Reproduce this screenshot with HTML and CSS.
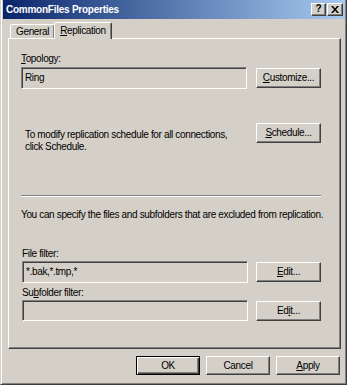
FILE: index.html
```html
<!DOCTYPE html>
<html>
<head>
<meta charset="utf-8">
<link rel="stylesheet" href="styles.css">
</head>
<body>
<div class="window">
  <div class="titlebar">
    <span class="title">CommonFiles Properties</span>
    <div class="tbtns">
      <span class="tbtn help">?</span>
      <span class="tbtn close">
        <svg width="8" height="7" viewBox="0 0 8 7"><path d="M0 0h2l2 2.5L6 0h2L5 3.5 8 7H6L4 4.5 2 7H0l3-3.5z" fill="#000"/></svg>
      </span>
    </div>
  </div>
  <div class="client">
    <div class="tabs">
      <div class="tab">General</div>
      <div class="tab active"><u>R</u>eplication</div>
    </div>
    <div class="panel">
      <div class="label first"><u>T</u>opology:</div>
      <div class="row">
        <div class="field">Ring</div>
        <div class="btn"><u>C</u>ustomize...</div>
      </div>
      <div class="row sched">
        <div class="note">To modify replication schedule for all connections,<br>click Schedule.</div>
        <div class="btn"><u>S</u>chedule...</div>
      </div>
      <div class="sep"></div>
      <div class="desc">You can specify the files and subfolders that are excluded from replication.</div>
      <div class="label ff">File filter:</div>
      <div class="row tight">
        <div class="field">*.bak,*.tmp,*</div>
        <div class="btn"><u>E</u>dit...</div>
      </div>
      <div class="label sf">Su<u>b</u>folder filter:</div>
      <div class="row tight">
        <div class="field short"></div>
        <div class="btn">Ed<u>i</u>t...</div>
      </div>
    </div>
    <div class="actions">
      <div class="btn dlg default">OK</div>
      <div class="btn dlg">Cancel</div>
      <div class="btn dlg"><u>A</u>pply</div>
    </div>
  </div>
</div>
</body>
</html>
```

FILE: styles.css
```css
* { box-sizing: border-box; }
html, body { margin: 0; padding: 0; background: #d4d0c8; }
body {
  font-family: "Liberation Sans", Arial, sans-serif;
  font-size: 10px;
  letter-spacing: -0.35px;
  color: #000;
  width: 347px;
  height: 385px;
  overflow: hidden;
}
u { text-decoration: underline; text-underline-offset: 1px; }
.window {
  width: 347px;
  height: 385px;
  background: #d4d0c8;
  border: 1px solid;
  border-top: 0;
  border-color: #d4d0c8 #404040 #404040 #d4d0c8;
  box-shadow: inset 1px 0 #fff, inset -1px -1px #808080;
  padding: 0 1px 2px 2px;
  display: flex;
  flex-direction: column;
}
.titlebar {
  height: 19px;
  background: linear-gradient(90deg, #0a246a 0%, #3a5a96 30%, #a6caf0 100%);
  display: flex;
  align-items: center;
  justify-content: space-between;
  padding: 0 2px 0 3px;
}
.title {
  color: #fff;
  font-weight: bold;
  font-size: 10px;
  letter-spacing: -0.25px;
}
.tbtns { display: flex; gap: 1px; margin-top: -1px; }
.tbtn {
  width: 15px;
  height: 13px;
  background: #d4d0c8;
  border: 1px solid;
  border-color: #fff #404040 #404040 #fff;
  box-shadow: inset -1px -1px #808080;
  display: flex;
  align-items: center;
  justify-content: center;
  font-weight: bold;
  font-size: 10px;
  line-height: 1;
  letter-spacing: 0;
}
.tbtn.close { width: 16px; }
.client {
  flex: 1;
  display: flex;
  flex-direction: column;
  padding: 3px 3px 0 5px;
}
.tabs {
  display: flex;
  align-items: flex-end;
  height: 16px;
  padding-left: 2px;
  position: relative;
  z-index: 1;
}
.tab {
  height: 14px;
  padding: 0 5px;
  line-height: 13px;
  border: 1px solid;
  border-bottom: 0;
  border-color: #fff #404040 transparent #fff;
  box-shadow: inset -1px 0 #808080;
  border-radius: 2px 2px 0 0;
  background: #d4d0c8;
}
.tab.active {
  height: 17px;
  margin-bottom: -1px;
  padding: 0 5px 0 5px;
  line-height: 15px;
  margin-left: -1px;
}
.panel {
  width: 333px;
  height: 311px;
  border: 1px solid;
  border-color: #fff #404040 #404040 #fff;
  box-shadow: inset -1px -1px #808080;
  padding: 0 19px 0 12px;
  display: flex;
  flex-direction: column;
}
.label { line-height: 13px; height: 13px; }
.label.first { margin-top: 13px; }
.label.ff { margin-top: 26px; padding-left: 1px; }
.label.sf { margin-top: 3px; padding-left: 1px; }
.row {
  display: flex;
  align-items: center;
  justify-content: space-between;
  margin-top: 2px;
}
.row.tight { margin-top: 1px; padding-left: 1px; }
.field {
  width: 226px;
  height: 22px;
  border: 1px solid;
  border-color: #808080 #fff #fff #808080;
  box-shadow: inset 1px 1px #404040, inset -1px -1px #d4d0c8;
  padding: 0 3px;
  line-height: 20px;
  background: #d4d0c8;
}
.field.short { height: 21px; }
.btn {
  width: 65px;
  height: 20px;
  border: 1px solid;
  border-color: #fff #404040 #404040 #fff;
  box-shadow: inset -1px -1px #808080;
  background: #d4d0c8;
  display: flex;
  align-items: center;
  justify-content: center;
  line-height: 1;
}
.row.sched {
  margin-top: 34px;
  align-items: flex-start;
}
.note {
  padding-top: 6px;
  padding-left: 4px;
  line-height: 12px;
}
.sep {
  margin-top: 42px;
  height: 2px;
  border-top: 1px solid #808080;
  border-bottom: 1px solid #fff;
}
.desc {
  margin-top: 11px;
  line-height: 13px;
  white-space: nowrap;
}
.actions {
  display: flex;
  justify-content: flex-end;
  gap: 6px;
  margin-top: 7px;
  padding-right: 2px;
}
.btn.dlg { width: 64px; height: 19px; }
.btn.default {
  border: 1px solid #000;
  box-shadow: inset 1px 1px #fff, inset -1px -1px #404040, inset -2px -2px #808080;
}
```
